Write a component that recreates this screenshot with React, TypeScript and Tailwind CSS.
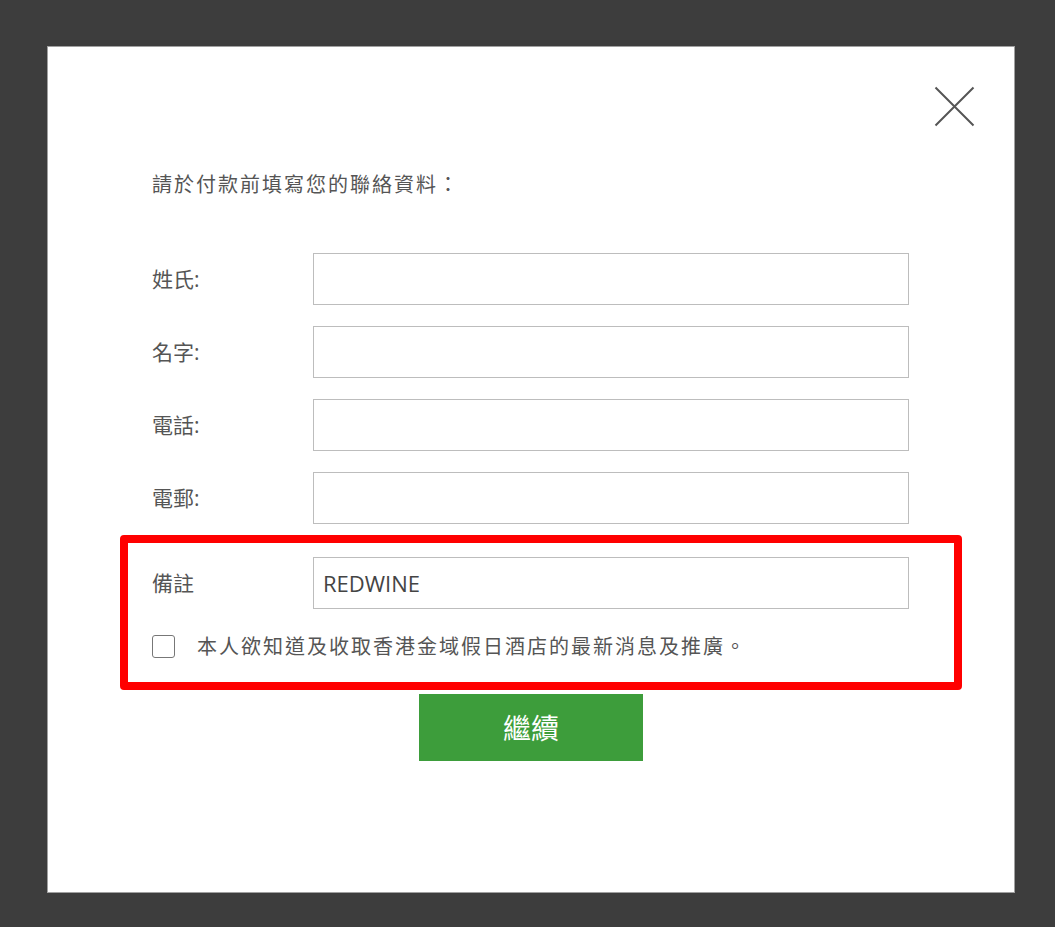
import React from "react";

const fields = ["姓氏:", "名字:", "電話:", "電郵:"];

const FONT = {
  fontFamily: '"Open Sans", "Noto Sans CJK TC", sans-serif',
};

const Row = ({ label, value }: { label: string; value?: string }) => (
  <div className="flex items-center h-[52px]">
    <label className="w-[161px] text-[21px] leading-[28px] text-[#555]">
      {label}
    </label>
    <input
      readOnly
      value={value ?? ""}
      className="w-[596px] h-[52px] border border-[#bdbdbd] bg-white px-[9px] text-[22px] text-[#444] outline-none"
    />
  </div>
);

const App = () => {
  return (
    <div
      className="w-full min-h-[927px] bg-[#3d3d3d] pt-[46px] pl-[47px]"
      style={FONT}
    >
      <div className="relative w-[968px] h-[847px] bg-white border border-[#a0a0a0]">
        {/* close */}
        <button className="absolute top-[39px] right-[39px] w-[41px] h-[41px]">
          <svg viewBox="0 0 41 41" className="w-[41px] h-[41px]">
            <path
              d="M1.5 1.5 L39.5 39.5 M39.5 1.5 L1.5 39.5"
              stroke="#555"
              strokeWidth="2"
              fill="none"
            />
          </svg>
        </button>

        <div className="pl-[104px] pt-[124px]">
          <p className="text-[20px] leading-[28px] text-[#555] tracking-[2px]">
            請於付款前填寫您的聯絡資料：
          </p>

          <div className="mt-[54px] flex flex-col gap-[21px]">
            {fields.map((f) => (
              <Row key={f} label={f} />
            ))}
          </div>

          {/* highlighted block */}
          <div className="mt-[11px] -ml-[32px] w-[842px] border-[8px] border-[#ff0000] rounded-[4px] pl-[24px] pt-[14px] pb-[24px]">
            <Row label="備註" value="REDWINE" />
            <div className="mt-[26px] flex items-center">
              <span className="w-[23px] h-[23px] rounded-[3px] border border-[#777] bg-white" />
              <span className="ml-[22px] text-[20px] leading-[23px] text-[#555] tracking-[2px]">
                本人欲知道及收取香港金域假日酒店的最新消息及推廣。
              </span>
            </div>
          </div>
        </div>

        <div className="mt-[4px] flex justify-center">
          <button className="w-[224px] h-[67px] bg-[#3d9d3b] text-white text-[28px]">
            繼續
          </button>
        </div>
      </div>
    </div>
  );
};

export default App;
